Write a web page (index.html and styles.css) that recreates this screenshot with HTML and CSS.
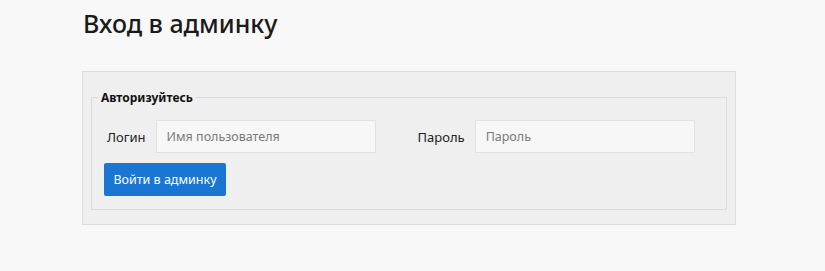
FILE: index.html
```html
<!DOCTYPE html>
<html lang="ru">
<head>
    <meta charset="UTF-8">
    <title>Вход в админку</title>
    <link rel="stylesheet" href="styles.css">
</head>
<body>
    <div class="page">
        <h1>Вход в админку</h1>

        <form class="login-panel">
            <fieldset>
                <legend>Авторизуйтесь</legend>
                <div class="fields">
                    <div class="field">
                        <label for="login">Логин</label>
                        <input type="text" id="login" placeholder="Имя пользователя">
                    </div>
                    <div class="field">
                        <label for="password">Пароль</label>
                        <input type="password" id="password" placeholder="Пароль">
                    </div>
                </div>
                <button type="submit">Войти в админку</button>
            </fieldset>
        </form>
    </div>
</body>
</html>
```

FILE: styles.css
```css
body {
    margin: 0;
    background: #f8f8f8;
    font-family: 'Noto Sans', sans-serif;
    color: #222;
}

.page {
    padding: 8px 0 0 82px;
}

h1 {
    margin: 0 0 33px 1px;
    font-size: 25px;
    font-weight: 500;
    line-height: 30px;
    color: #1a1a1a;
}

.login-panel {
    width: 654px;
    box-sizing: border-box;
    background: #efefef;
    border: 1px solid #dcdcdc;
    padding: 17px 8px 14px;
}

fieldset {
    margin: 0;
    border: 1px solid #dadada;
    padding: 14px 12px 13px 12px;
}

legend {
    padding: 0 3px;
    margin-left: -6px;
    font-size: 12px;
    font-weight: bold;
    color: #111;
}

.fields {
    display: flex;
    gap: 42px;
    padding-left: 3px;
}

.field {
    display: flex;
    align-items: center;
    gap: 10px;
}

label {
    font-size: 13px;
    color: #222;
}

input {
    width: 220px;
    height: 33px;
    box-sizing: border-box;
    border: 1px solid #e2e2e2;
    background: #f7f7f7;
    padding: 0 10px;
    font-family: inherit;
    font-size: 12.5px;
    color: #333;
}

input::placeholder {
    color: #7b7b7b;
}

button {
    margin-top: 10px;
    width: 122px;
    height: 33px;
    border: none;
    border-radius: 2px;
    background: #1976d2;
    color: #fff;
    font-family: inherit;
    font-size: 12.5px;
}
```
